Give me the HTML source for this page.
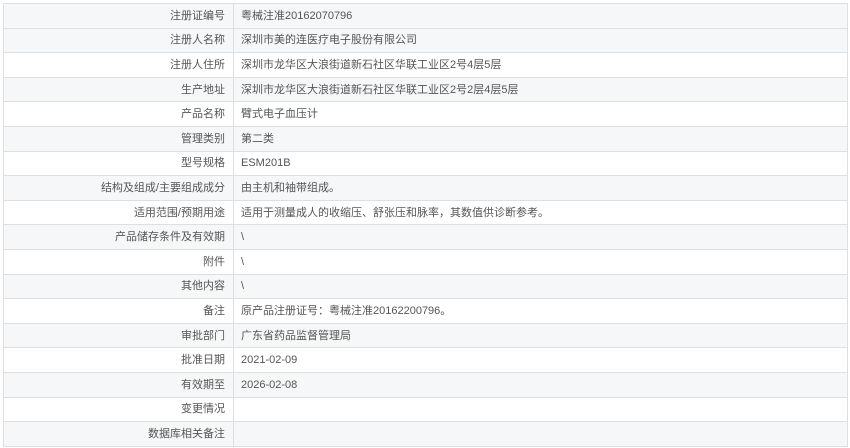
<!DOCTYPE html>
<html><head><meta charset="utf-8"><style>
html,body{margin:0;padding:0;background:#fff;width:850px;height:448px;overflow:hidden}
table{position:absolute;left:3px;top:3px;width:845px;border-collapse:collapse;font-family:"Liberation Sans","Noto Sans CJK SC",sans-serif;font-size:11px;color:#555}
td{border:1px solid #dfdfdf;height:23.6px;padding:0;line-height:14px}
td.l{width:221px;text-align:right;padding-right:8px}
td.v{padding-left:7px}
tr.g td{background:#f6f7f9}
</style></head><body>
<table>
<tr class="g"><td class="l">注册证编号</td><td class="v">粤械注准20162070796</td></tr>
<tr class="g"><td class="l">注册人名称</td><td class="v">深圳市美的连医疗电子股份有限公司</td></tr>
<tr><td class="l">注册人住所</td><td class="v">深圳市龙华区大浪街道新石社区华联工业区2号4层5层</td></tr>
<tr class="g"><td class="l">生产地址</td><td class="v">深圳市龙华区大浪街道新石社区华联工业区2号2层4层5层</td></tr>
<tr><td class="l">产品名称</td><td class="v">臂式电子血压计</td></tr>
<tr class="g"><td class="l">管理类别</td><td class="v">第二类</td></tr>
<tr><td class="l">型号规格</td><td class="v">ESM201B</td></tr>
<tr class="g"><td class="l">结构及组成/主要组成成分</td><td class="v">由主机和袖带组成。</td></tr>
<tr><td class="l">适用范围/预期用途</td><td class="v">适用于测量成人的收缩压、舒张压和脉率，其数值供诊断参考。</td></tr>
<tr class="g"><td class="l">产品储存条件及有效期</td><td class="v">\</td></tr>
<tr><td class="l">附件</td><td class="v">\</td></tr>
<tr class="g"><td class="l">其他内容</td><td class="v">\</td></tr>
<tr><td class="l">备注</td><td class="v">原产品注册证号：粤械注准20162200796。</td></tr>
<tr class="g"><td class="l">审批部门</td><td class="v">广东省药品监督管理局</td></tr>
<tr><td class="l">批准日期</td><td class="v">2021-02-09</td></tr>
<tr class="g"><td class="l">有效期至</td><td class="v">2026-02-08</td></tr>
<tr><td class="l">变更情况</td><td class="v"></td></tr>
<tr class="g"><td class="l">数据库相关备注</td><td class="v"></td></tr>
</table>
</body></html>
